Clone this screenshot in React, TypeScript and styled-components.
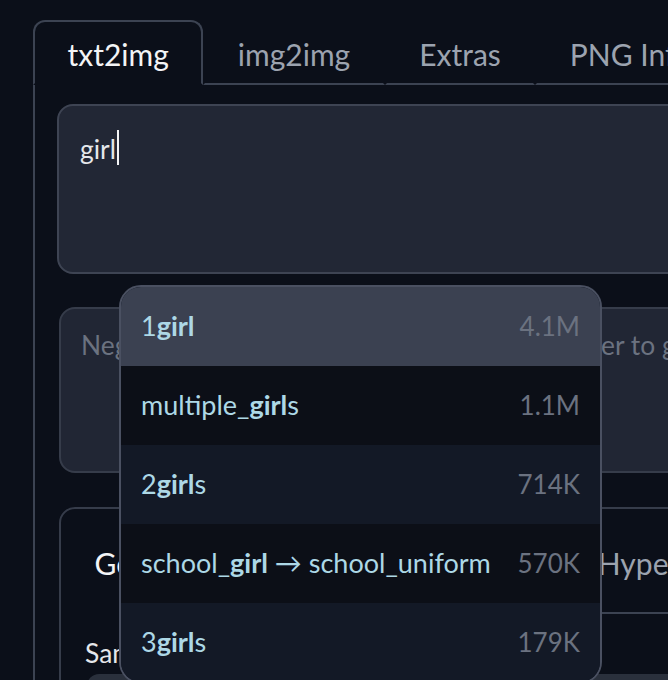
import React from "react";
import styled, { createGlobalStyle } from "styled-components";

const GlobalStyle = createGlobalStyle`
  html, body {
    margin: 0;
    padding: 0;
    background: #0b0f19;
    overflow: hidden;
  }
  body {
    font-family: "Source Sans Pro", Lato, "Noto Sans", sans-serif;
  }
`;

const Page = styled.div`
  position: relative;
  width: 668px;
  height: 680px;
  overflow: hidden;
  background: #0b0f19;
  padding: 20px 0 0 33px;
  box-sizing: border-box;
`;

const Wide = styled.div`
  width: 900px;
`;

const TabRow = styled.div`
  display: flex;
  flex-wrap: nowrap;
  white-space: nowrap;
`;

const Tab = styled.div<{ $active?: boolean }>`
  box-sizing: border-box;
  height: 65px;
  padding: 3px 32.5px 0;
  display: flex;
  align-items: center;
  font-size: 30px;
  color: ${(p) => (p.$active ? "#f3f4f6" : "#9ca3af")};
  border: 2px solid ${(p) => (p.$active ? "#3c4352" : "transparent")};
  border-bottom: 2px solid ${(p) => (p.$active ? "transparent" : "#3c4352")};
  border-radius: ${(p) => (p.$active ? "12px 12px 0 0" : "0")};
`;

const TabFill = styled.div`
  flex: 1;
  border-bottom: 2px solid #3c4352;
`;

const Panel = styled.div`
  border-left: 2px solid #3c4352;
  border-right: 2px solid #3c4352;
  padding: 19px 22px 0 22px;
  height: 700px;
`;

const PromptBox = styled.div`
  box-sizing: border-box;
  height: 170px;
  border: 2px solid #3e4453;
  border-radius: 16px;
  background: #222735;
  padding: 22px 21px;
  font-size: 26.4px;
  line-height: 42px;
  color: #e5e7eb;
  display: flex;
  align-items: flex-start;
`;

const Caret = styled.span`
  display: inline-block;
  width: 2px;
  height: 35px;
  margin-top: 2px;
  margin-left: 1px;
  background: #f3f4f6;
`;

const NegBox = styled.div`
  box-sizing: border-box;
  height: 166px;
  margin: 33px 0 0 2px;
  border: 2px solid #363c4a;
  border-radius: 16px;
  background: #212634;
  padding: 15px 20px;
  font-size: 26.4px;
  line-height: 42px;
  color: #6b7280;
  white-space: nowrap;
  overflow: hidden;
`;

const GenPanel = styled.div`
  box-sizing: border-box;
  margin: 34px 0 0 2px;
  border: 2px solid #363c4a;
  border-radius: 16px;
  background: #0b0f19;
  height: 300px;
  padding: 0 0 0 24px;
`;

const SubTabRow = styled.div`
  display: flex;
  white-space: nowrap;
  margin-left: -24px;
`;

const SubTab = styled.div<{ $active?: boolean }>`
  box-sizing: border-box;
  height: 105px;
  padding: 38px 33.4px 0;
  font-size: 30px;
  line-height: 32px;
  color: ${(p) => (p.$active ? "#f3f4f6" : "#9ca3af")};
  border-bottom: 2px solid ${(p) => (p.$active ? "transparent" : "#3c4352")};
`;

const SubFill = styled.div`
  flex: 1;
  border-bottom: 2px solid #3c4352;
`;

const Label = styled.div`
  margin-top: 19px;
  font-size: 26.4px;
  line-height: 40px;
  color: #e5e7eb;
`;

const Dropdown = styled.div`
  margin: 1px 0 0 2px;
  height: 60px;
  border-radius: 12px;
  background: #2a303c;
`;

const Popup = styled.div`
  position: absolute;
  left: 119px;
  top: 285px;
  width: 483px;
  box-sizing: border-box;
  border: 2px solid #4a5061;
  border-radius: 22px;
  overflow: hidden;
  background: #131926;
`;

const Row = styled.div<{ $tone: "hi" | "dark" | "mid" }>`
  height: 79px;
  display: flex;
  align-items: center;
  justify-content: space-between;
  padding: 0 20px;
  font-size: 27px;
  line-height: 32px;
  padding-bottom: 2px;
  box-sizing: border-box;
  background: ${(p) =>
    p.$tone === "hi" ? "#3b4151" : p.$tone === "dark" ? "#0c0f17" : "#131926"};
`;

const TagText = styled.span`
  color: #add8e6;
  white-space: nowrap;
`;

const Match = styled.b`
  font-weight: 700;
`;

const Count = styled.span`
  color: #6b7280;
  font-size: 26px;
`;

type Item = { pre: string; match: string; post: string; alias?: string; count: string };

const items: Item[] = [
  { pre: "1", match: "girl", post: "", count: "4.1M" },
  { pre: "multiple_", match: "girl", post: "s", count: "1.1M" },
  { pre: "2", match: "girl", post: "s", count: "714K" },
  { pre: "school_", match: "girl", post: "", alias: "school_uniform", count: "570K" },
  { pre: "3", match: "girl", post: "s", count: "179K" },
];

const tones: Array<"hi" | "dark" | "mid"> = ["hi", "dark", "mid", "dark", "mid"];

export default function App() {
  return (
    <>
      <GlobalStyle />
      <Page>
        <Wide>
          <TabRow>
            <Tab $active>txt2img</Tab>
            <Tab>img2img</Tab>
            <Tab>Extras</Tab>
            <Tab>PNG Info</Tab>
            <Tab>Checkpoint Merger</Tab>
            <TabFill />
          </TabRow>
          <Panel>
            <PromptBox>
              <span>girl</span>
              <Caret />
            </PromptBox>
            <NegBox>Negative prompt (press Ctrl+Enter or Alt+Enter to generate)</NegBox>
            <GenPanel>
              <SubTabRow>
                <SubTab $active>Generation</SubTab>
                <SubTab>Textual Inversion</SubTab>
                <SubTab>Hypernetworks</SubTab>
                <SubFill />
              </SubTabRow>
              <Label>Sampling method</Label>
              <Dropdown />
            </GenPanel>
          </Panel>
        </Wide>
        <Popup>
          {items.map((it, i) => (
            <Row key={i} $tone={tones[i]}>
              <TagText>
                {it.pre}
                <Match>{it.match}</Match>
                {it.post}
                {it.alias ? ` → ${it.alias}` : ""}
              </TagText>
              <Count>{it.count}</Count>
            </Row>
          ))}
        </Popup>
      </Page>
    </>
  );
}
